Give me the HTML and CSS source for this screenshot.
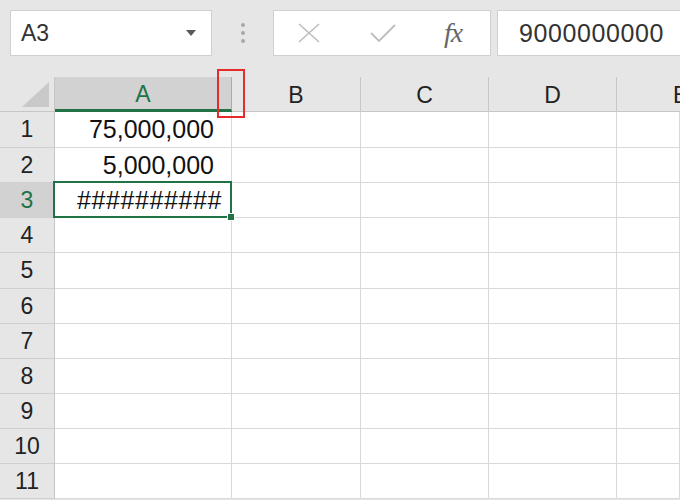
FILE: index.html
```html
<!DOCTYPE html>
<html>
<head>
<meta charset="utf-8">
<link rel="stylesheet" href="styles.css">
</head>
<body>
<div class="toolbar">
  <div class="namebox">
    <span class="name">A3</span>
    <svg class="caret" width="12" height="8" viewBox="0 0 12 8"><path d="M1 1 L11 1 L6 7 Z" fill="#595959"/></svg>
  </div>
  <div class="sep">
    <svg width="6" height="22" viewBox="0 0 6 22"><circle cx="3" cy="3" r="2" fill="#a8a8a8"/><circle cx="3" cy="11" r="2" fill="#a8a8a8"/><circle cx="3" cy="19" r="2" fill="#a8a8a8"/></svg>
  </div>
  <div class="buttons">
    <svg class="btn cancel" width="24" height="20" viewBox="0 0 24 20"><path d="M2 1 L22 19 M22 1 L2 19" stroke="#bdbdbd" stroke-width="1.6" fill="none"/></svg>
    <svg class="btn ok" width="28" height="20" viewBox="0 0 28 20"><path d="M2 10 L10 18 L26 2" stroke="#bdbdbd" stroke-width="1.8" fill="none"/></svg>
    <span class="fx">fx</span>
  </div>
  <div class="formula">9000000000</div>
</div>
<div class="sheet">
  <div class="corner"><svg width="30" height="26" viewBox="0 0 30 26"><path d="M28 0 L28 25 L1 25 Z" fill="#c9c9c9"/></svg></div>
  <div class="colhead sel">A</div>
  <div class="colhead">B</div>
  <div class="colhead">C</div>
  <div class="colhead">D</div>
  <div class="colhead last">E</div>

  <div class="rowhead">1</div><div class="cell num">75,000,000</div><div class="cell"></div><div class="cell"></div><div class="cell"></div><div class="cell"></div>
  <div class="rowhead">2</div><div class="cell num">5,000,000</div><div class="cell"></div><div class="cell"></div><div class="cell"></div><div class="cell"></div>
  <div class="rowhead sel">3</div><div class="cell num active">##########</div><div class="cell"></div><div class="cell"></div><div class="cell"></div><div class="cell"></div>
  <div class="rowhead">4</div><div class="cell"></div><div class="cell"></div><div class="cell"></div><div class="cell"></div><div class="cell"></div>
  <div class="rowhead">5</div><div class="cell"></div><div class="cell"></div><div class="cell"></div><div class="cell"></div><div class="cell"></div>
  <div class="rowhead">6</div><div class="cell"></div><div class="cell"></div><div class="cell"></div><div class="cell"></div><div class="cell"></div>
  <div class="rowhead">7</div><div class="cell"></div><div class="cell"></div><div class="cell"></div><div class="cell"></div><div class="cell"></div>
  <div class="rowhead">8</div><div class="cell"></div><div class="cell"></div><div class="cell"></div><div class="cell"></div><div class="cell"></div>
  <div class="rowhead">9</div><div class="cell"></div><div class="cell"></div><div class="cell"></div><div class="cell"></div><div class="cell"></div>
  <div class="rowhead">10</div><div class="cell"></div><div class="cell"></div><div class="cell"></div><div class="cell"></div><div class="cell"></div>
  <div class="rowhead">11</div><div class="cell"></div><div class="cell"></div><div class="cell"></div><div class="cell"></div><div class="cell"></div>
</div>
<div class="marker"></div>
</body>
</html>
```

FILE: styles.css
```css
html, body {
  margin: 0;
  padding: 0;
}
body {
  width: 680px;
  height: 500px;
  overflow: hidden;
  background: #e6e6e6;
  font-family: "Liberation Sans", Arial, sans-serif;
  color: #222;
  position: relative;
}
.toolbar {
  height: 77px;
  box-sizing: border-box;
  padding-top: 10px;
  display: flex;
  align-items: flex-start;
  background: #e6e6e6;
}
.namebox {
  margin-left: 10px;
  width: 202px;
  height: 46px;
  box-sizing: border-box;
  background: #fff;
  border: 1px solid #d0d0d0;
  display: flex;
  align-items: center;
  justify-content: space-between;
  padding: 0 14px 0 10px;
}
.name {
  font-size: 23px;
  color: #333;
}
.sep {
  width: 61px;
  height: 46px;
  display: flex;
  align-items: center;
  justify-content: center;
}
.buttons {
  width: 218px;
  height: 46px;
  box-sizing: border-box;
  background: #fff;
  border: 1px solid #d0d0d0;
  display: flex;
  align-items: center;
  padding-left: 23px;
}
.buttons .cancel { margin-right: 48px; }
.buttons .ok { margin-right: 47px; }
.fx {
  font-family: "Liberation Serif", "Times New Roman", serif;
  font-style: italic;
  font-size: 28px;
  color: #666;
  letter-spacing: -1px;
}
.formula {
  margin-left: 6px;
  flex: 1;
  height: 46px;
  box-sizing: border-box;
  background: #fff;
  border: 1px solid #d0d0d0;
  border-right: none;
  font-size: 25px;
  letter-spacing: 0.6px;
  color: #333;
  padding-left: 21px;
  display: flex;
  align-items: center;
}
.sheet {
  display: grid;
  grid-template-columns: 55px 177px 129px 128px 128px 63px;
  grid-template-rows: 35px 36px 35px 35px 35px 36px 35px 35px 35px 35px 35px 35px;
  background: #fff;
}
.corner {
  background: #e6e6e6;
  border-right: 1px solid #c6c6c6;
  border-bottom: 1px solid #c6c6c6;
  box-sizing: border-box;
  display: flex;
  align-items: flex-end;
  justify-content: flex-end;
  padding: 0 3px 3px 0;
}
.colhead {
  background: #e6e6e6;
  box-sizing: border-box;
  border-right: 1px solid #c6c6c6;
  border-bottom: 1px solid #c6c6c6;
  display: flex;
  align-items: center;
  justify-content: center;
  font-size: 23px;
  color: #222;
  padding-top: 2px;
}
.colhead.last {
  justify-content: flex-start;
  padding-left: 56px;
  border-right: none;
}
.colhead.sel {
  background: #d2d2d2;
  color: #217346;
  border-bottom: 3px solid #217346;
  border-right: 1px solid #ababab;
}
.rowhead {
  background: #e6e6e6;
  box-sizing: border-box;
  border-right: 1px solid #c6c6c6;
  border-bottom: 1px solid #cfcfcf;
  display: flex;
  align-items: center;
  justify-content: center;
  font-size: 23px;
  color: #222;
}
.rowhead.sel {
  background: #d2d2d2;
  color: #217346;
}
.cell {
  box-sizing: border-box;
  border-right: 1px solid #d9d9d9;
  border-bottom: 1px solid #d9d9d9;
  background: #fff;
}
.num {
  font-size: 25px;
  color: #111;
  display: flex;
  align-items: center;
  justify-content: flex-end;
  padding-right: 17px;
}
.active {
  position: relative;
  padding-right: 9px;
  letter-spacing: 0.6px;
}
.active::before {
  content: "";
  position: absolute;
  left: -2px;
  top: -2px;
  right: -1px;
  bottom: -1px;
  border: 2px solid #217346;
}
.active::after {
  content: "";
  position: absolute;
  right: -4px;
  bottom: -4px;
  width: 6px;
  height: 6px;
  background: #217346;
  border: 1px solid #fff;
}
.marker {
  position: absolute;
  left: 217px;
  top: 69px;
  width: 28px;
  height: 49px;
  box-sizing: border-box;
  border: 2px solid #e52b2b;
}
```
